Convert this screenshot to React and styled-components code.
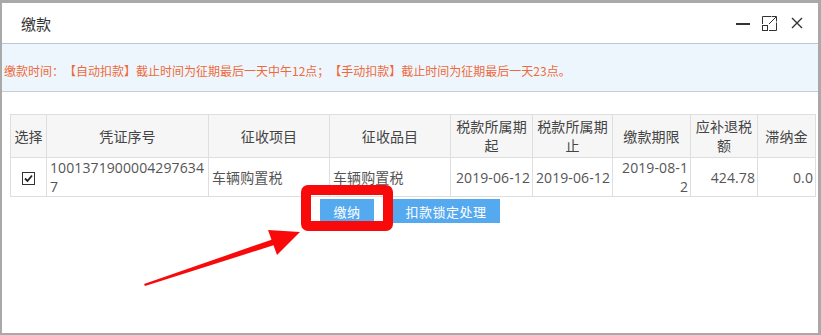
import React from "react";
import styled, { createGlobalStyle } from "styled-components";

const GlobalStyle = createGlobalStyle`
  html, body {
    margin: 0;
    padding: 0;
    background: #a9a9a9;
  }
  body {
    font-family: "Open Sans", "Noto Sans CJK SC", sans-serif;
    text-spacing-trim: space-all;
  }
`;

const Dialog = styled.div`
  position: relative;
  margin: 3px 3px 0 2px;
  width: 816px;
  height: 330px;
  background: #fff;
  overflow: hidden;
`;

const TitleBar = styled.div`
  height: 40px;
  display: flex;
  align-items: center;
  padding: 0 15px 0 19px;
  border-bottom: 1px solid #b6c8d9;
`;

const Title = styled.div`
  flex: 1;
  font-family: "Noto Sans CJK SC", sans-serif;
  font-size: 15px;
  color: #333;
`;

const Controls = styled.div`
  display: flex;
  align-items: center;
  gap: 12px;
  color: #333;

  svg:last-child {
    margin-left: 2px;
  }
`;

const Notice = styled.div`
  height: 48px;
  box-sizing: border-box;
  display: flex;
  align-items: center;
  padding: 5px 0 0 2px;
  background: #eef6fd;
  border-bottom: 1px solid #c3ced7;
  font-family: "Noto Sans CJK SC", sans-serif;
  font-size: 12px;
  color: #ee6a3b;
  text-spacing-trim: space-all;
`;

const TableWrap = styled.div`
  padding: 22px 3px 0 8px;
`;

const Table = styled.table`
  width: 100%;
  border-collapse: collapse;
  table-layout: fixed;
  font-size: 14px;
  letter-spacing: 0.1px;
  color: #555;
`;

const Th = styled.th`
  height: 42px;
  padding: 0 2px;
  background: #f6f6f6;
  border: 1px solid #dedede;
  font-weight: normal;
  color: #444;
  line-height: 19px;
  text-align: center;
  vertical-align: middle;
`;

const Td = styled.td`
  height: 38px;
  padding: 0 ${(p) => (p.$align === "right" ? "2px" : "3px")};
  border: 1px solid #dedede;
  line-height: 19px;
  text-align: ${(p) => p.$align || "left"};
  vertical-align: middle;
  word-break: break-all;
`;

const CheckBox = styled.span`
  display: inline-flex;
  align-items: center;
  justify-content: center;
  width: 13px;
  height: 13px;
  box-sizing: border-box;
  border: 1px solid #333;
  background: #fff;
  vertical-align: middle;
`;

const Actions = styled.div`
  display: flex;
  justify-content: center;
  gap: 19px;
  margin-top: 2px;
`;

const Button = styled.button`
  height: 24px;
  padding: 0 13px;
  border: none;
  background: #55a9ef;
  color: #fff;
  font-family: "Noto Sans CJK SC", sans-serif;
  font-size: 13px;
  letter-spacing: 0.5px;
  cursor: pointer;
`;

const RedBox = styled.div`
  position: absolute;
  left: 299px;
  top: 182px;
  width: 92px;
  height: 46px;
  box-sizing: border-box;
  border: 10px solid #f80a0a;
  border-radius: 7px;
  pointer-events: none;
`;

const ArrowLayer = styled.svg`
  position: absolute;
  left: 0;
  top: 0;
  pointer-events: none;
`;

const columns = [
  { title: "选择", width: 36 },
  { title: "凭证序号", width: 162 },
  { title: "征收项目", width: 121 },
  { title: "征收品目", width: 121 },
  { title: "税款所属期起", width: 82 },
  { title: "税款所属期止", width: 80 },
  { title: "缴款期限", width: 78 },
  { title: "应补退税额", width: 67 },
  { title: "滞纳金", width: 58 },
];

const row = {
  voucher: "1001371900004297634" + "7",
  item: "车辆购置税",
  category: "车辆购置税",
  start: "2019-06-12",
  end: "2019-06-12",
  due: "2019-08-12",
  amount: "424.78",
  late: "0.0",
};

const Minimize = () => (
  <svg width="14" height="14" viewBox="0 0 14 14">
    <rect x="0" y="7" width="14" height="2" fill="currentColor" />
  </svg>
);

const Maximize = () => (
  <svg width="15" height="15" viewBox="0 0 15 15" fill="none" stroke="currentColor" strokeWidth="1">
    <path d="M9 0.5 H0.5 V8" />
    <path d="M14.5 6.5 V14.5 H7" />
    <rect x="0.5" y="9.5" width="5" height="5" />
    <path d="M7 8 L14 1" />
    <path d="M9.5 0.5 H14.5 V5.5" />
  </svg>
);

const Close = () => (
  <svg width="12" height="12" viewBox="0 0 12 12" stroke="currentColor" strokeWidth="1.4">
    <path d="M1 1 L11 11 M11 1 L1 11" />
  </svg>
);

const Check = () => (
  <svg width="9" height="9" viewBox="0 0 9 9" fill="none" stroke="#222" strokeWidth="1.8">
    <path d="M1 4.5 L3.5 7 L8 1.5" />
  </svg>
);

export default function App() {
  return (
    <>
      <GlobalStyle />
      <Dialog>
        <TitleBar>
          <Title>缴款</Title>
          <Controls>
            <Minimize />
            <Maximize />
            <Close />
          </Controls>
        </TitleBar>
        <Notice>
          缴款时间：【自动扣款】截止时间为征期最后一天中午12点；【手动扣款】截止时间为征期最后一天23点。
        </Notice>
        <TableWrap>
          <Table>
            <colgroup>
              {columns.map((c) => (
                <col key={c.title} style={{ width: c.width }} />
              ))}
            </colgroup>
            <thead>
              <tr>
                {columns.map((c) => (
                  <Th key={c.title}>{c.title}</Th>
                ))}
              </tr>
            </thead>
            <tbody>
              <tr>
                <Td $align="center">
                  <CheckBox>
                    <Check />
                  </CheckBox>
                </Td>
                <Td>{row.voucher}</Td>
                <Td>{row.item}</Td>
                <Td>{row.category}</Td>
                <Td $align="right">{row.start}</Td>
                <Td $align="right">{row.end}</Td>
                <Td $align="right">{row.due}</Td>
                <Td $align="right">{row.amount}</Td>
                <Td $align="right">{row.late}</Td>
              </tr>
            </tbody>
          </Table>
        </TableWrap>
        <Actions>
          <Button>缴纳</Button>
          <Button>扣款锁定处理</Button>
        </Actions>
        <RedBox />
        <ArrowLayer width="816" height="330">
          <polygon
            points="142,281 269.5,236.7 266,227 298,229 275,252 271.5,242.3 143,283"
            fill="#f80a0a"
          />
        </ArrowLayer>
      </Dialog>
    </>
  );
}
